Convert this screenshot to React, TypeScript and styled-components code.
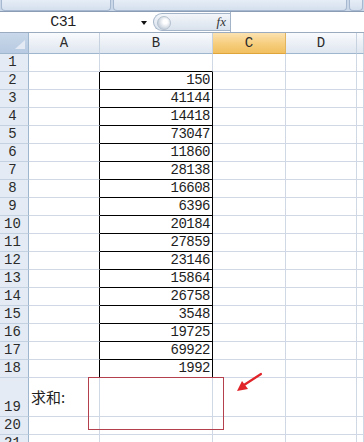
import React from 'react';
import styled, { createGlobalStyle } from 'styled-components';

const GlobalStyle = createGlobalStyle`
  html, body {
    margin: 0;
    padding: 0;
    background: #ffffff;
    overflow: hidden;
  }
  body {
    width: 364px;
    height: 442px;
  }
`;

const Page = styled.div`
  position: relative;
  width: 364px;
  height: 442px;
  overflow: hidden;
  background: #ffffff;
  font-family: 'Liberation Mono', 'Noto Sans CJK SC', monospace;
  color: #1e1e1e;
`;

const TopStrip = styled.div`
  display: flex;
  height: 11px;
  background: #c9d7e8;
  border-bottom: 1px solid #8a9db5;
`;

const RibbonPanel = styled.div<{ $width: string }>`
  flex: ${(p) => p.$width};
  margin: 0 1px;
  background: linear-gradient(#e6edf6, #d5e0ee);
  border: 1px solid #a6b8cf;
  border-top: none;
  border-radius: 0 0 4px 4px;
`;

const FormulaBar = styled.div`
  display: flex;
  align-items: center;
  height: 20px;
  border-bottom: 1px solid #9aabbf;
  background: #ffffff;
`;

const NameBox = styled.div`
  position: relative;
  width: 150px;
  height: 100%;
  display: flex;
  align-items: center;
  justify-content: center;
  padding-right: 24px;
  box-sizing: border-box;
`;

const NameText = styled.span`
  font-size: 15px;
  letter-spacing: -0.5px;
`;

const DropArrow = styled.span`
  position: absolute;
  right: 3px;
  top: 9px;
  width: 0;
  height: 0;
  border-left: 3.5px solid transparent;
  border-right: 3.5px solid transparent;
  border-top: 4px solid #111;
`;

const FxPill = styled.div`
  position: relative;
  width: 77px;
  height: 18px;
  box-sizing: border-box;
  margin-left: 3px;
  border: 1px solid #a4b4c8;
  border-right: none;
  border-radius: 10px 0 0 10px;
  background: linear-gradient(#f3f6fa, #d9e2ed);
  display: flex;
  align-items: center;
  justify-content: flex-end;
  padding-right: 4px;
`;

const FxGrip = styled.span`
  position: absolute;
  left: 3px;
  top: 2px;
  width: 12px;
  height: 12px;
  border-radius: 50%;
  background: radial-gradient(circle at 60% 40%, #ffffff 20%, #c7d1dc 70%);
  border: 1px solid #b5c1cf;
`;

const FxLabel = styled.span`
  font-family: 'Liberation Serif', serif;
  font-style: italic;
  font-size: 13px;
  color: #333;
`;

const FormulaInput = styled.div`
  flex: 1;
  height: 100%;
  border-left: 1px solid #a4b4c8;
  background: #ffffff;
`;

const Sheet = styled.div`
  position: relative;
  display: grid;
  grid-template-columns: 29px 71px 113px 73px 71px 1fr;
  grid-template-rows: 21px repeat(18, 18px) 39px 18px 18px;
`;

const Corner = styled.div`
  position: relative;
  background: linear-gradient(#c9d8ea, #b7cae1);
  border-right: 1px solid #9eb6ce;
  border-bottom: 1px solid #9eb6ce;
  &::after {
    content: '';
    position: absolute;
    right: 3px;
    bottom: 4px;
    width: 0;
    height: 0;
    border-left: 10px solid transparent;
    border-bottom: 9px solid #e3eaf4;
  }
`;

const ColHeader = styled.div<{ $active?: boolean }>`
  display: flex;
  align-items: center;
  justify-content: center;
  font-size: 14px;
  color: #2b2b2b;
  background: ${(p) =>
    p.$active
      ? 'linear-gradient(#fbe2b0, #f6cd7c 55%, #f1c060)'
      : 'linear-gradient(#f9fbfd, #e9eef5 60%, #dfe6ef)'};
  border-right: 1px solid ${(p) => (p.$active ? '#e2b45e' : '#c6d2df')};
  border-bottom: 1px solid ${(p) => (p.$active ? '#e0a43c' : '#9eb6ce')};
`;

const RowHeader = styled.div`
  display: flex;
  align-items: flex-end;
  justify-content: center;
  padding: 0 3px 1px 0;
  font-size: 14px;
  line-height: 16px;
  color: #2b2b2b;
  background: #e4ebf4;
  border-right: 1px solid #9eb6ce;
  border-bottom: 1px solid #c4d1e0;
`;

const Cell = styled.div<{ $right?: string; $bottom?: string; $align?: string; $valign?: string }>`
  display: flex;
  align-items: ${(p) => p.$valign || 'flex-end'};
  justify-content: ${(p) => p.$align || 'flex-start'};
  padding: 0 2px 1px 2px;
  font-size: 14px;
  line-height: 16px;
  letter-spacing: -0.5px;
  border-right: 1px solid ${(p) => p.$right || '#d0d7e5'};
  border-bottom: 1px solid ${(p) => p.$bottom || '#d0d7e5'};
  overflow: visible;
  white-space: nowrap;
`;

const SumLabel = styled.span`
  font-family: 'Noto Sans CJK SC', sans-serif;
  font-size: 15px;
  letter-spacing: 0;
`;

// red annotation drawn over the sheet
const SumBox = styled.div`
  position: absolute;
  left: 88px;
  top: 344px;
  width: 136px;
  height: 53px;
  box-sizing: border-box;
  border: 1px solid #b3404c;
`;

const ArrowMark = styled.svg`
  position: absolute;
  left: 232px;
  top: 338px;
`;

const values = [
  150, 41144, 14418, 73047, 11860, 28138, 16608, 6396, 20184, 27859, 23146, 15864, 26758, 3548,
  19725, 69922, 1992,
];

const columns = ['A', 'B', 'C', 'D', ''];
const rowCount = 21;

const App: React.FC = () => {
  const renderRow = (r: number) => {
    const boxed = r >= 2 && r <= 18;
    return (
      <React.Fragment key={r}>
        <RowHeader>{r}</RowHeader>
        {columns.map((_, c) => {
          if (c === 0) {
            return (
              <Cell key={c} $right={boxed ? '#000' : undefined} $valign={r === 19 ? 'center' : undefined}>
                {r === 19 && <SumLabel>求和:</SumLabel>}
              </Cell>
            );
          }
          if (c === 1) {
            return (
              <Cell
                key={c}
                $align="flex-end"
                $right={boxed ? '#000' : undefined}
                $bottom={boxed || r === 1 ? '#000' : undefined}
              >
                {boxed ? values[r - 2] : ''}
              </Cell>
            );
          }
          return <Cell key={c} />;
        })}
      </React.Fragment>
    );
  };

  return (
    <Page>
      <GlobalStyle />
      <TopStrip>
        <RibbonPanel $width="0 0 108px" />
        <RibbonPanel $width="1" />
        <RibbonPanel $width="0 0 12px" />
      </TopStrip>
      <FormulaBar>
        <NameBox>
          <NameText>C31</NameText>
          <DropArrow />
        </NameBox>
        <FxPill>
          <FxGrip />
          <FxLabel>fx</FxLabel>
        </FxPill>
        <FormulaInput />
      </FormulaBar>
      <Sheet>
        <Corner />
        {columns.map((col) => (
          <ColHeader key={col || 'E'} $active={col === 'C'}>
            {col}
          </ColHeader>
        ))}
        {Array.from({ length: rowCount }, (_, i) => renderRow(i + 1))}
        <SumBox />
        <ArrowMark width="36" height="30" viewBox="0 0 36 30">
          <path d="M29 3 L12 14" stroke="#e0242a" strokeWidth="2.2" strokeLinecap="round" />
          <path d="M5 20 L10 10 L16 18 Z" fill="#e0242a" />
        </ArrowMark>
      </Sheet>
    </Page>
  );
};

export default App;
